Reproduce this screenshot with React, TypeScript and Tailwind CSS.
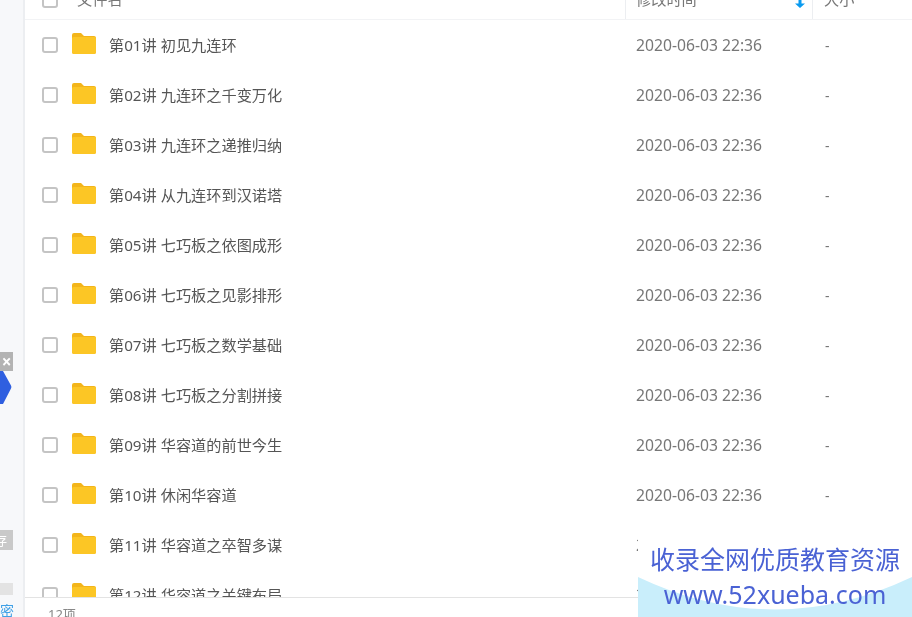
import React from 'react';

const rows = [
  '第01讲 初见九连环',
  '第02讲 九连环之千变万化',
  '第03讲 九连环之递推归纳',
  '第04讲 从九连环到汉诺塔',
  '第05讲 七巧板之依图成形',
  '第06讲 七巧板之见影排形',
  '第07讲 七巧板之数学基础',
  '第08讲 七巧板之分割拼接',
  '第09讲 华容道的前世今生',
  '第10讲 休闲华容道',
  '第11讲 华容道之卒智多谋',
  '第12讲 华容道之关键布局',
];

function Folder() {
  return (
    <svg width="26" height="23" viewBox="0 0 26 23" className="mb-[3px] shrink-0">
      <path d="M1 3a2 2 0 0 1 2-2h7l3 3h10a2 2 0 0 1 2 2v14a2 2 0 0 1-2 2H3a2 2 0 0 1-2-2z" fill="#f3b51a" />
      <path d="M1 6.5a1.5 1.5 0 0 1 1.5-1.5h21a1.5 1.5 0 0 1 1.5 1.5V20a2 2 0 0 1-2 2H3a2 2 0 0 1-2-2z" fill="#fcc625" />
    </svg>
  );
}

function Checkbox() {
  return <div className="h-4 w-4 shrink-0 rounded-[3px] border-2 border-[#c4c4c4] bg-white" />;
}

function Row({ name }: { name: string }) {
  return (
    <div className="flex h-[50px] shrink-0 items-center">
      <div className="ml-[17px] mr-[13px]"><Checkbox /></div>
      <Folder />
      <div className="ml-3 w-[527px] shrink-0 text-[15.2px] text-[#555]">{name}</div>
      <div className="w-[189px] shrink-0 pt-[2px] text-[15.7px] text-[#777]">2020-06-03 22:36</div>
      <div className="text-[14px] text-[#777]">-</div>
    </div>
  );
}

export default function App() {
  return (
    <div className="relative flex h-[617px] w-[912px] overflow-hidden bg-white font-['Noto_Sans','Noto_Sans_CJK_SC',sans-serif] blur-[0.4px]">
      <aside className="w-[25px] shrink-0 border-r-2 border-[#eceef1] bg-[#f7f8fa]" />

      <main className="flex min-w-0 flex-1 flex-col">
        <div className="flex h-5 shrink-0 items-center overflow-hidden border-b border-[#f2f3f5] text-[15.2px] text-[#777]">
          <div className="-mt-[19px] ml-[17px] flex items-center">
            <Checkbox />
            <span className="ml-[19px] w-[548px] shrink-0 leading-none">文件名</span>
          </div>
          <div className="flex h-5 w-[188px] shrink-0 items-start border-x border-[#eceef1] pl-[10px]">
            <span className="-mt-[8px] leading-none">修改时间</span>
            <svg className="ml-auto mr-[7px]" width="10" height="8" viewBox="0 0 10 8">
              <path d="M3.5 0h3v3.5H10L5 8 0 3.5h3.5z" fill="#0a9bf0" />
            </svg>
          </div>
          <span className="-mt-[19px] ml-[11px] leading-none">大小</span>
        </div>

        <div className="min-h-0 flex-1 overflow-hidden">
          {rows.map((name) => <Row key={name} name={name} />)}
        </div>

        <div className="h-5 shrink-0 border-t border-[#e3e3e3] pl-[23px] pt-[10px] text-[13px] leading-none text-[#888]">12项</div>
      </main>

      {/* side widget */}
      <div className="absolute left-0 top-[352px] flex h-[19px] w-[13px] items-center justify-center overflow-hidden bg-[#b3b3b3] text-[17px] font-bold leading-none text-white">×</div>
      <svg className="absolute left-0 top-[371px]" width="12" height="33" viewBox="0 0 12 33">
        <path d="M0 0h3l8 14.5a3 3 0 0 1 0 3L3 33H0z" fill="#2f5fe0" />
      </svg>
      <div className="absolute left-0 top-[530px] flex h-[20px] w-[13px] items-center overflow-hidden bg-[#c9c9c9] text-[13px] leading-none text-white">
        <span className="-ml-[6px] shrink-0">存</span>
      </div>
      <div className="absolute left-0 top-[583px] h-3 w-[13px] bg-[#e3e3e3]" />
      <div className="absolute left-0 top-[604px] w-[14px] overflow-hidden text-[14px] leading-none text-[#3fa0e6]">密</div>

      {/* watermark */}
      <div className="absolute left-[638px] top-[532px] h-[85px] w-[274px] bg-white">
        <svg className="absolute inset-0" width="274" height="85" viewBox="0 0 274 85">
          <path d="M0 45Q137 110 274 45V85H0z" fill="#c9eefb" />
        </svg>
        <div className="relative pt-[10px] text-center text-[25px] leading-[34px] text-[#4a62d4]">收录全网优质教育资源</div>
        <div className="relative text-center text-[25px] leading-[36px] text-[#4a62d4]">www.52xueba.com</div>
      </div>
    </div>
  );
}
